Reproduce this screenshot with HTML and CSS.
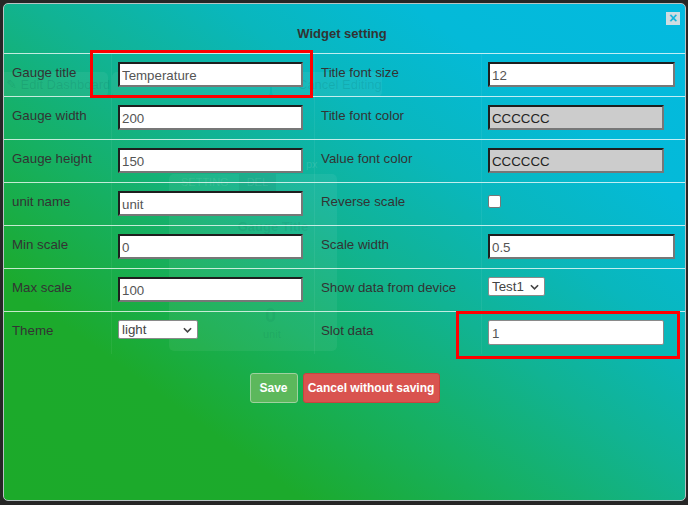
FILE: index.html
```html
<!DOCTYPE html>
<html>
<head>
<meta charset="utf-8">
<link rel="stylesheet" href="styles.css">
</head>
<body>
<div class="dialog">
  <div class="ghost">
    <div class="g-btn g-a">✎ Edit Dashboard</div>
    <div class="g-btn g-b"></div>
    <div class="g-btn g-c">Cancel Editing</div>
    <div class="g-px">px</div>
    <div class="g-card">
      <div class="g-head"><span class="g-set">SETTING</span><span class="g-del">DEL</span></div>
      <div class="g-title">Gauge Title</div>
      <div class="g-val">0</div>
      <div class="g-unit">unit</div>
    </div>
  </div>
  <div class="header">
    <span class="title">Widget setting</span>
    <span class="close">×</span>
  </div>
  <div class="form">
    <div class="row">
      <div class="cell lbl">Gauge title</div>
      <div class="cell fld"><input class="txt" type="text" value="Temperature"></div>
      <div class="cell lbl lbl2">Title font size</div>
      <div class="cell fld"><input class="txt wide" type="text" value="12"></div>
    </div>
    <div class="row">
      <div class="cell lbl">Gauge width</div>
      <div class="cell fld"><input class="txt" type="text" value="200"></div>
      <div class="cell lbl lbl2">Title font color</div>
      <div class="cell fld"><input class="txt color" type="text" value="CCCCCC"></div>
    </div>
    <div class="row">
      <div class="cell lbl">Gauge height</div>
      <div class="cell fld"><input class="txt" type="text" value="150"></div>
      <div class="cell lbl lbl2">Value font color</div>
      <div class="cell fld"><input class="txt color" type="text" value="CCCCCC"></div>
    </div>
    <div class="row">
      <div class="cell lbl">unit name</div>
      <div class="cell fld"><input class="txt" type="text" value="unit"></div>
      <div class="cell lbl lbl2">Reverse scale</div>
      <div class="cell fld"><span class="check"></span></div>
    </div>
    <div class="row">
      <div class="cell lbl">Min scale</div>
      <div class="cell fld"><input class="txt" type="text" value="0"></div>
      <div class="cell lbl lbl2">Scale width</div>
      <div class="cell fld"><input class="txt wide" type="text" value="0.5"></div>
    </div>
    <div class="row">
      <div class="cell lbl">Max scale</div>
      <div class="cell fld"><input class="txt" type="text" value="100"></div>
      <div class="cell lbl lbl2">Show data from device</div>
      <div class="cell fld"><span class="sel sel-dev">Test1<svg class="chev" viewBox="0 0 10 6"><path d="M1 1 L5 5 L9 1" fill="none" stroke="#444" stroke-width="1.8"/></svg></span></div>
    </div>
    <div class="row">
      <div class="cell lbl">Theme</div>
      <div class="cell fld"><span class="sel sel-theme">light<svg class="chev" viewBox="0 0 10 6"><path d="M1 1 L5 5 L9 1" fill="none" stroke="#444" stroke-width="1.8"/></svg></span></div>
      <div class="cell lbl lbl2">Slot data</div>
      <div class="cell fld"><input class="txt slot" type="text" value="1"></div>
    </div>
  </div>
  <div class="actions">
    <button class="btn save">Save</button>
    <button class="btn cancel">Cancel without saving</button>
  </div>
  <div class="hl hl1"></div>
  <div class="hl hl2"></div>
</div>
</body>
</html>
```
FILE: styles.css
```css
html, body {
  margin: 0;
  padding: 0;
}
body {
  background: #262626;
  font-family: "Liberation Sans", Arial, sans-serif;
  width: 688px;
  height: 505px;
  overflow: hidden;
}
.dialog {
  position: relative;
  margin: 3px 0 0 3px;
  width: 681px;
  height: 496px;
  border: 1px solid #b8c4c4;
  border-radius: 5px;
  background: linear-gradient(to top right, #1caa2a 0%, #1caa2c 22%, #16b062 38%, #11b393 52%, #09b7bd 66%, #04bad8 80%, #03bae0 100%);
  overflow: hidden;
}
.ghost {
  position: absolute;
  inset: 0;
  pointer-events: none;
}
.g-btn {
  position: absolute;
  top: 68px;
  height: 25px;
  border-radius: 5px;
  background: rgba(255, 255, 255, 0.06);
  color: rgba(0, 60, 60, 0.12);
  font-size: 13px;
  line-height: 25px;
  white-space: nowrap;
  box-sizing: border-box;
}
.g-a { left: 0; width: 104px; padding-left: 2px; border-radius: 0 5px 5px 0; }
.g-b { left: 108px; width: 158px; }
.g-c { left: 268px; width: 110px; padding-left: 26px; }
.g-px {
  position: absolute;
  left: 302px;
  top: 154px;
  font-size: 11px;
  color: rgba(255, 255, 255, 0.12);
}
.g-card {
  position: absolute;
  left: 165px;
  top: 170px;
  width: 168px;
  height: 177px;
  border-radius: 5px;
  background: rgba(255, 255, 255, 0.06);
}
.g-head {
  height: 17px;
  display: flex;
  font-size: 11px;
  line-height: 17px;
  color: rgba(255, 255, 255, 0.1);
}
.g-set { padding: 0 10px 0 12px; }
.g-del { background: rgba(0, 0, 0, 0.05); padding: 0 8px; }
.g-title {
  margin-top: 28px;
  text-align: center;
  font-weight: bold;
  font-size: 13px;
  padding-left: 40px;
  color: rgba(0, 80, 60, 0.1);
}
.g-val {
  position: absolute;
  left: 96px;
  top: 130px;
  font-size: 20px;
  font-weight: bold;
  color: rgba(0, 80, 60, 0.08);
}
.g-unit {
  position: absolute;
  left: 94px;
  top: 154px;
  font-size: 11px;
  color: rgba(0, 80, 60, 0.1);
}
.header {
  position: relative;
  height: 49px;
  text-align: center;
}
.title {
  display: inline-block;
  margin-top: 22px;
  margin-left: -5px;
  font-size: 13px;
  font-weight: bold;
  color: #333;
}
.close {
  position: absolute;
  right: 5px;
  top: 8px;
  width: 14px;
  height: 13px;
  background: #cfdde2;
  color: #12b5dc;
  font-size: 14px;
  font-weight: bold;
  line-height: 13px;
  text-align: center;
}
.form {
  position: relative;
  display: flex;
  flex-direction: column;
}
.row {
  display: grid;
  grid-template-columns: 107px 203px 167px 1fr;
  height: 43px;
  border-top: 1px solid rgba(255, 255, 255, 0.75);
  box-sizing: border-box;
}
.cell + .cell {
  border-left: 1px solid rgba(255, 255, 255, 0.06);
}
.lbl {
  font-size: 13.3px;
  color: #333;
  padding: 11px 0 0 8px;
  white-space: nowrap;
}
.lbl2 {
  padding-left: 6px;
}
.fld {
  padding: 8px 0 0 6px;
}
.txt {
  display: block;
  box-sizing: border-box;
  width: 185px;
  height: 25px;
  margin: 0;
  border-style: solid;
  border-width: 2px;
  border-color: #1e1e1e #777 #777 #1e1e1e;
  background: #fff;
  font-family: "Liberation Sans", Arial, sans-serif;
  font-size: 13.3px;
  color: #555;
  padding: 2px 2px 0 2px;
  outline: none;
}
.txt.wide { width: 187px; }
.txt.color {
  width: 176px;
  background: #cccccc;
  color: #222;
}
.txt.slot {
  width: 176px;
  border: 1px solid #8a8a8a;
  border-radius: 2px;
  padding-left: 3px;
}
.check {
  display: block;
  width: 11px;
  height: 11px;
  margin: 4px 0 0 0;
  background: #fff;
  border: 1px solid #777;
  border-radius: 2px;
}
.sel {
  display: flex;
  align-items: center;
  box-sizing: border-box;
  height: 19px;
  background: #fff;
  border: 1px solid #8a8a8a;
  border-radius: 2px;
  font-size: 13.3px;
  color: #444;
  padding-left: 3px;
  position: relative;
}
.sel-dev { width: 57px; }
.sel-theme { width: 80px; }
.chev {
  position: absolute;
  right: 5px;
  top: 6px;
  width: 9px;
  height: 6px;
}
.actions {
  display: flex;
  justify-content: center;
  gap: 5px;
  margin-top: 19px;
}
.btn {
  height: 30px;
  border-radius: 3px;
  font-family: "Liberation Sans", Arial, sans-serif;
  font-size: 12px;
  font-weight: bold;
  color: #fff;
  padding: 0;
  margin: 0;
}
.save {
  width: 48px;
  background: #5cb85c;
  border: 1px solid #9fd19f;
}
.cancel {
  width: 137px;
  background: #d9534f;
  border: 1px solid #c9433f;
}
.hl {
  position: absolute;
  border: 3px solid #f00;
  box-sizing: border-box;
  pointer-events: none;
}
.hl1 { left: 86px; top: 46px; width: 223px; height: 48px; }
.hl2 { left: 452px; top: 307px; width: 224px; height: 48px; }
```
